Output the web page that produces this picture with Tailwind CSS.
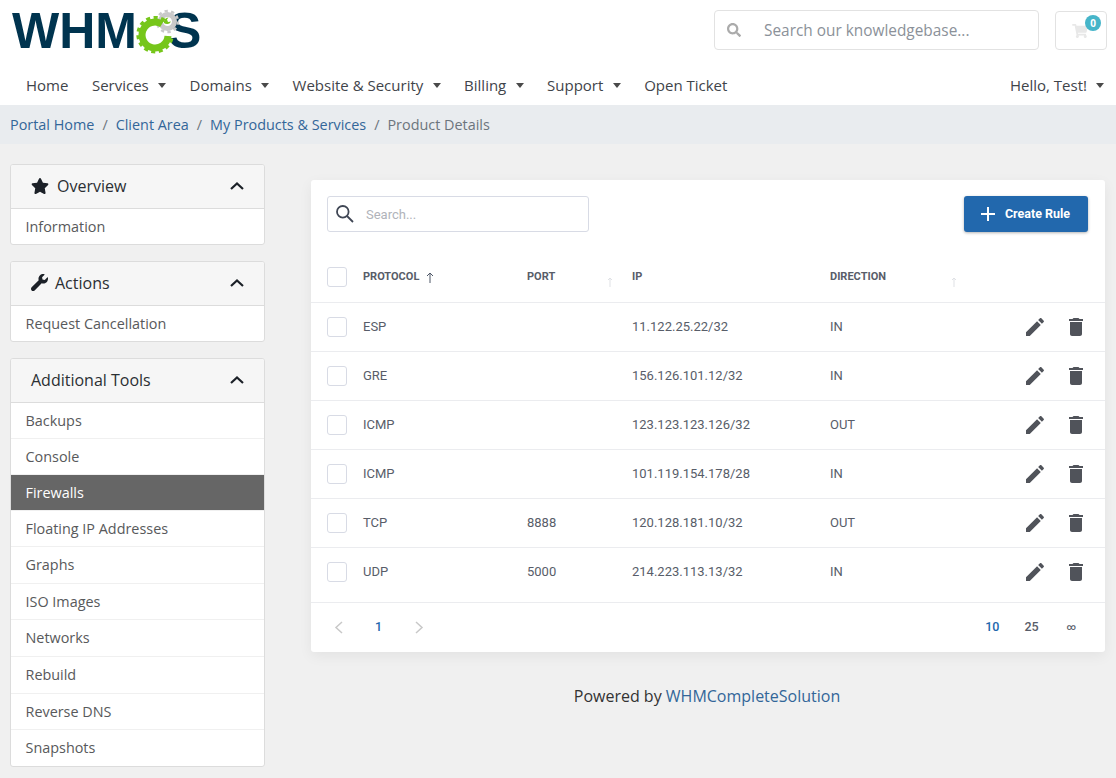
<!DOCTYPE html>
<html lang="en">
<head>
    <meta charset="UTF-8">
    <title>Firewalls</title>
    <script src="https://cdn.jsdelivr.net/npm/@tailwindcss/browser@4"></script>
</head>
<body class="bg-[#f0f0f0] font-['Open_Sans',sans-serif] text-[#333] overflow-hidden h-[778px]">

    <!-- Header -->
    <header class="bg-white h-[67px] flex items-start justify-between pl-[12px] pr-[9px]">
        <div class="flex items-center h-[62px] text-[#00344f] font-['Liberation_Sans',sans-serif] font-bold text-[50px] leading-none">
            <span>WHM</span>
            <span class="order-2 -ml-[7px]">S</span>
            <svg class="relative z-10 w-[38px] h-[46px] overflow-visible" viewBox="0 0 38 46">
                <!-- grey cog -->
                <circle cx="30.5" cy="13.5" r="7" fill="#fff" stroke="#c9c9c9" stroke-width="5"/>
                <circle cx="30.5" cy="13.5" r="10.5" fill="none" stroke="#c9c9c9" stroke-width="2.5" stroke-dasharray="3.3 3.3"/>
                <path d="M27 15a4.5 4.5 0 0 0 7-1.5l-3 .5-1-2.500 1.500-2a4.500 4.500 0 0 0-4.500 5.500z" fill="#76c61a"/>
                <!-- green cog -->
                <path d="M25 16A13 13 0 1 0 31 28" fill="none" stroke="#76c61a" stroke-width="7"/>
                <path d="M27.500 12.500A17 17 0 1 0 35 28" fill="none" stroke="#76c61a" stroke-width="3.500" stroke-dasharray="4 3.400"/>
            </svg>
        </div>
        <div class="flex items-start pt-[10px]">
            <div class="w-[325px] h-[40px] border border-[#e2e2e2] rounded-[4px] flex items-center bg-white">
                <svg class="w-[14px] h-[14px] ml-[12px] mr-[23px] text-[#ababab]" viewBox="0 0 512 512" fill="currentColor"><path d="M505 442.7L405.3 343c-4.5-4.5-10.6-7-17-7H372c27.6-35.3 44-79.7 44-128C416 93.1 322.9 0 208 0S0 93.1 0 208s93.1 208 208 208c48.3 0 92.7-16.4 128-44v16.3c0 6.4 2.5 12.5 7 17l99.7 99.7c9.4 9.4 24.6 9.4 33.9 0l28.3-28.3c9.4-9.4 9.4-24.6.1-34zM208 336c-70.7 0-128-57.2-128-128 0-70.7 57.2-128 128-128 70.7 0 128 57.2 128 128 0 70.7-57.2 128-128 128z"/></svg>
                <span class="pt-[1px] text-[15.4px] text-[#8b9199]">Search our knowledgebase...</span>
            </div>
            <div class="relative w-[52px] h-[39px] ml-[16px] mt-[1px] border border-[#e2e2e2] rounded-[4px] flex items-center justify-center bg-white">
                <svg class="w-[16px] h-[14px] -ml-[2px] mt-[1px] text-[#e8e8e8]" viewBox="0 0 576 512" fill="currentColor"><path d="M528.12 301.319l47.273-208C578.806 78.301 567.391 64 551.99 64H159.208l-9.166-44.81C147.758 8.021 137.93 0 126.529 0H24C10.745 0 0 10.745 0 24v16c0 13.255 10.745 24 24 24h69.883l70.248 343.435C147.325 417.1 136 435.222 136 456c0 30.928 25.072 56 56 56s56-25.072 56-56c0-15.674-6.447-29.835-16.824-40h209.647C430.447 426.165 424 440.326 424 456c0 30.928 25.072 56 56 56s56-25.072 56-56c0-22.172-12.888-41.332-31.579-50.405l5.517-24.276c3.413-15.018-8.002-29.319-23.403-29.319H218.117l-6.545-32h293.145c11.206 0 20.92-7.754 23.403-18.681z"/></svg>
                <span class="absolute top-[3px] right-[5px] w-[16px] h-[16px] rounded-full bg-[#46b5c9] text-white text-[10px] font-bold flex items-center justify-center">0</span>
            </div>
        </div>
    </header>

    <!-- Nav -->
    <nav class="bg-white h-[38px] pb-[2px] flex items-center justify-between pl-[26px] pr-[12px] text-[15px] text-[#3f444a]">
        <ul class="flex items-center gap-[23.5px]">
            <li>Home</li>
            <li class="flex items-center">Services<i class="ml-[9.3px] border-x-[4.5px] border-x-transparent border-t-[5px] border-t-[#4a4a4a]"></i></li>
            <li class="flex items-center">Domains<i class="ml-[9.3px] border-x-[4.5px] border-x-transparent border-t-[5px] border-t-[#4a4a4a]"></i></li>
            <li class="flex items-center">Website &amp; Security<i class="ml-[9.3px] border-x-[4.5px] border-x-transparent border-t-[5px] border-t-[#4a4a4a]"></i></li>
            <li class="flex items-center">Billing<i class="ml-[9.3px] border-x-[4.5px] border-x-transparent border-t-[5px] border-t-[#4a4a4a]"></i></li>
            <li class="flex items-center">Support<i class="ml-[9.3px] border-x-[4.5px] border-x-transparent border-t-[5px] border-t-[#4a4a4a]"></i></li>
            <li>Open Ticket</li>
        </ul>
        <div class="flex items-center">Hello, Test!<i class="ml-[9px] border-x-[4.5px] border-x-transparent border-t-[5px] border-t-[#4a4a4a]"></i></div>
    </nav>

    <!-- Breadcrumb -->
    <div class="bg-[#e9ecef] h-[39px] flex items-center pl-[10px] text-[14.4px] text-[#6c757d]">
        <a class="text-[#336699]">Portal Home</a><span class="px-[8px]">/</span>
        <a class="text-[#336699]">Client Area</a><span class="px-[8px]">/</span>
        <a class="text-[#336699]">My Products &amp; Services</a><span class="px-[8px]">/</span>
        <span>Product Details</span>
    </div>

    <main class="flex items-start pt-[20px] pl-[10px]">
        <!-- Sidebar -->
        <aside class="w-[255px] shrink-0 flex flex-col gap-[16px] text-[14.4px] text-[#58595b]">
            <section class="border border-[#dcdcdc] rounded-[3px] bg-white overflow-hidden">
                <div class="h-[44px] pb-[2px] bg-[#f6f6f6] border-b border-[#dcdcdc] flex items-center pl-[20px] pr-[20px] text-[16px] text-[#2b2f33]">
                    <svg class="w-[18px] h-[16px] mr-[8px] text-[#1c2128]" viewBox="0 0 576 512" fill="currentColor"><path d="M259.3 17.8L194 150.2 47.9 171.5c-26.2 3.8-36.7 36.1-17.7 54.6l105.7 103-25 145.5c-4.5 26.3 23.2 46 46.4 33.7L288 439.6l130.7 68.7c23.2 12.2 50.9-7.4 46.4-33.7l-25-145.5 105.7-103c19-18.5 8.5-50.8-17.7-54.6L382 150.2 316.7 17.8c-11.7-23.6-45.6-23.9-57.4 0z"/></svg>
                    <span>Overview</span>
                    <svg class="ml-auto w-[14px] h-[8px] text-[#1c2128]" viewBox="0 0 14 8" fill="none" stroke="currentColor" stroke-width="2.2"><path d="M1 7l6-5.500L13 7"/></svg>
                </div>
                <div class="h-[35px] flex items-center pl-[14.5px]">Information</div>
            </section>
            <section class="border border-[#dcdcdc] rounded-[3px] bg-white overflow-hidden">
                <div class="h-[44px] pb-[2px] bg-[#f6f6f6] border-b border-[#dcdcdc] flex items-center pl-[20px] pr-[20px] text-[16px] text-[#2b2f33]">
                    <svg class="w-[17px] h-[17px] mr-[7px] text-[#1c2128]" viewBox="0 0 512 512" fill="currentColor"><path d="M507.73 109.1c-2.24-9.03-13.54-12.09-20.12-5.51l-74.36 74.36-67.88-11.31-11.31-67.88 74.36-74.36c6.62-6.62 3.43-17.9-5.66-20.16-47.38-11.74-99.55.91-136.58 37.93-39.64 39.64-50.55 97.1-34.05 147.2L18.74 402.76c-24.99 24.99-24.99 65.51 0 90.5 24.99 24.99 65.51 24.99 90.5 0l213.21-213.21c50.12 16.71 107.47 5.68 147.37-34.22 37.07-37.07 49.7-89.32 37.91-136.73z"/></svg>
                    <span>Actions</span>
                    <svg class="ml-auto w-[14px] h-[8px] text-[#1c2128]" viewBox="0 0 14 8" fill="none" stroke="currentColor" stroke-width="2.2"><path d="M1 7l6-5.500L13 7"/></svg>
                </div>
                <div class="h-[35px] flex items-center pl-[14.5px]">Request Cancellation</div>
            </section>
            <section class="border border-[#dcdcdc] rounded-[3px] bg-white overflow-hidden">
                <div class="h-[44px] pb-[2px] bg-[#f6f6f6] border-b border-[#dcdcdc] flex items-center pl-[20px] pr-[20px] text-[16px] text-[#2b2f33]">
                    <span>Additional Tools</span>
                    <svg class="ml-auto w-[14px] h-[8px] text-[#1c2128]" viewBox="0 0 14 8" fill="none" stroke="currentColor" stroke-width="2.2"><path d="M1 7l6-5.500L13 7"/></svg>
                </div>
                <ul class="divide-y divide-[#f0f0f0]">
                    <li class="h-[36px] flex items-center pl-[14.5px]">Backups</li>
                    <li class="h-[36px] flex items-center pl-[14.5px]">Console</li>
                    <li class="h-[36px] flex items-center pl-[14.5px] bg-[#666666] text-white">Firewalls</li>
                    <li class="h-[36px] flex items-center pl-[14.5px]">Floating IP Addresses</li>
                    <li class="h-[37px] flex items-center pl-[14.5px]">Graphs</li>
                    <li class="h-[36px] flex items-center pl-[14.5px]">ISO Images</li>
                    <li class="h-[37px] flex items-center pl-[14.5px]">Networks</li>
                    <li class="h-[37px] flex items-center pl-[14.5px]">Rebuild</li>
                    <li class="h-[36px] flex items-center pl-[14.5px]">Reverse DNS</li>
                    <li class="h-[36px] flex items-center pl-[14.5px]">Snapshots</li>
                </ul>
            </section>
        </aside>

        <!-- Content -->
        <div class="w-[794px] ml-[46px] mt-[16px]">
            <div class="bg-white rounded-[3px] shadow-[0_4px_14px_rgba(0,0,0,0.06)] font-['Roboto',sans-serif] text-[13px] text-[#585d69]">
                <div class="flex items-center justify-between pl-[16px] pr-[17px] pt-[16px] h-[76px] pb-[24px]">
                    <div class="w-[262px] h-[36px] border border-[#d8dbe5] rounded-[3px] flex items-center pl-[7px]">
                        <svg class="w-[20px] h-[20px] -mt-[1px] text-[#3f4654]" viewBox="0 0 20 20" fill="none" stroke="currentColor" stroke-width="1.8"><circle cx="7.8" cy="7.8" r="5.8"/><path d="M12 12l6 6"/></svg>
                        <span class="ml-[11px] pt-[1px] text-[#b0b3ba]">Search...</span>
                    </div>
                    <button class="w-[124px] h-[36px] bg-[#2268ad] rounded-[3px] text-white font-bold text-[12.5px] flex items-center justify-center gap-[9px] shadow-[0_1px_3px_rgba(0,0,0,0.3)]">
                        <svg class="w-[16px] h-[16px] -ml-[2px]" viewBox="0 0 16 16" stroke="currentColor" stroke-width="2"><path d="M8 1v14M1 8h14"/></svg>
                        <span>Create Rule</span>
                    </button>
                </div>

                <!-- Table head -->
                <div class="grid grid-cols-[36px_164px_105px_198px_1fr_80px] items-center h-[47px] pb-[3px] px-[16px] border-b border-[#ebecef] text-[11px] font-bold">
                    <i class="w-[20px] h-[20px] -mt-[1px] border border-[#d8dbe5] rounded-[3px]"></i>
                    <div class="flex items-center">PROTOCOL<svg class="w-[8px] h-[11px] ml-[7px] text-[#4d5666]" viewBox="0 0 8 11" fill="none" stroke="currentColor"><path d="M4 11V1M1 4l3-3 3 3"/></svg></div>
                    <div class="flex items-center">PORT<svg class="w-[6px] h-[10px] ml-[52px] mt-[9px] text-[#dfe1e5]" viewBox="0 0 6 10" fill="none" stroke="currentColor"><path d="M3 10V1M1 3l2-2 2 2"/></svg></div>
                    <div>IP</div>
                    <div class="flex items-center">DIRECTION<svg class="w-[6px] h-[10px] ml-[65px] mt-[9px] text-[#dfe1e5]" viewBox="0 0 6 10" fill="none" stroke="currentColor"><path d="M3 10V1M1 3l2-2 2 2"/></svg></div>
                    <div></div>
                </div>

                <!-- Rows -->
                <div class="grid grid-cols-[36px_164px_105px_198px_1fr_80px] items-center h-[49px] px-[16px] border-b border-[#ebecef]">
                    <i class="w-[20px] h-[20px] border border-[#d8dbe5] rounded-[3px]"></i><div>ESP</div><div></div><div>11.122.25.22/32</div><div>IN</div>
                    <div class="flex justify-end gap-[17px] text-[#50535a] pr-[2px]">
                        <svg class="w-[24px] h-[24px]" viewBox="0 0 24 24" fill="currentColor"><path d="M3 17.25V21h3.75L17.81 9.94l-3.75-3.75L3 17.25zM20.71 7.04c.39-.39.39-1.02 0-1.41l-2.34-2.34c-.39-.39-1.02-.39-1.41 0l-1.83 1.83 3.75 3.75 1.83-1.83z"/></svg>
                        <svg class="w-[24px] h-[24px] -mr-[1px]" viewBox="0 0 24 24" fill="currentColor"><path d="M6 19c0 1.1.9 2 2 2h8c1.1 0 2-.9 2-2V7H6v12zM19 4h-3.5l-1-1h-5l-1 1H5v2h14V4z"/></svg>
                    </div>
                </div>
                <div class="grid grid-cols-[36px_164px_105px_198px_1fr_80px] items-center h-[49px] px-[16px] border-b border-[#ebecef]">
                    <i class="w-[20px] h-[20px] border border-[#d8dbe5] rounded-[3px]"></i><div>GRE</div><div></div><div>156.126.101.12/32</div><div>IN</div>
                    <div class="flex justify-end gap-[17px] text-[#50535a] pr-[2px]">
                        <svg class="w-[24px] h-[24px]" viewBox="0 0 24 24" fill="currentColor"><path d="M3 17.25V21h3.75L17.81 9.94l-3.75-3.75L3 17.25zM20.71 7.04c.39-.39.39-1.02 0-1.41l-2.34-2.34c-.39-.39-1.02-.39-1.41 0l-1.83 1.83 3.75 3.75 1.83-1.83z"/></svg>
                        <svg class="w-[24px] h-[24px] -mr-[1px]" viewBox="0 0 24 24" fill="currentColor"><path d="M6 19c0 1.1.9 2 2 2h8c1.1 0 2-.9 2-2V7H6v12zM19 4h-3.5l-1-1h-5l-1 1H5v2h14V4z"/></svg>
                    </div>
                </div>
                <div class="grid grid-cols-[36px_164px_105px_198px_1fr_80px] items-center h-[49px] px-[16px] border-b border-[#ebecef]">
                    <i class="w-[20px] h-[20px] border border-[#d8dbe5] rounded-[3px]"></i><div>ICMP</div><div></div><div>123.123.123.126/32</div><div>OUT</div>
                    <div class="flex justify-end gap-[17px] text-[#50535a] pr-[2px]">
                        <svg class="w-[24px] h-[24px]" viewBox="0 0 24 24" fill="currentColor"><path d="M3 17.25V21h3.75L17.81 9.94l-3.75-3.75L3 17.25zM20.71 7.04c.39-.39.39-1.02 0-1.41l-2.34-2.34c-.39-.39-1.02-.39-1.41 0l-1.83 1.83 3.75 3.75 1.83-1.83z"/></svg>
                        <svg class="w-[24px] h-[24px] -mr-[1px]" viewBox="0 0 24 24" fill="currentColor"><path d="M6 19c0 1.1.9 2 2 2h8c1.1 0 2-.9 2-2V7H6v12zM19 4h-3.5l-1-1h-5l-1 1H5v2h14V4z"/></svg>
                    </div>
                </div>
                <div class="grid grid-cols-[36px_164px_105px_198px_1fr_80px] items-center h-[49px] px-[16px] border-b border-[#ebecef]">
                    <i class="w-[20px] h-[20px] border border-[#d8dbe5] rounded-[3px]"></i><div>ICMP</div><div></div><div>101.119.154.178/28</div><div>IN</div>
                    <div class="flex justify-end gap-[17px] text-[#50535a] pr-[2px]">
                        <svg class="w-[24px] h-[24px]" viewBox="0 0 24 24" fill="currentColor"><path d="M3 17.25V21h3.75L17.81 9.94l-3.75-3.75L3 17.25zM20.71 7.04c.39-.39.39-1.02 0-1.41l-2.34-2.34c-.39-.39-1.02-.39-1.41 0l-1.83 1.83 3.75 3.75 1.83-1.83z"/></svg>
                        <svg class="w-[24px] h-[24px] -mr-[1px]" viewBox="0 0 24 24" fill="currentColor"><path d="M6 19c0 1.1.9 2 2 2h8c1.1 0 2-.9 2-2V7H6v12zM19 4h-3.5l-1-1h-5l-1 1H5v2h14V4z"/></svg>
                    </div>
                </div>
                <div class="grid grid-cols-[36px_164px_105px_198px_1fr_80px] items-center h-[49px] px-[16px] border-b border-[#ebecef]">
                    <i class="w-[20px] h-[20px] border border-[#d8dbe5] rounded-[3px]"></i><div>TCP</div><div>8888</div><div>120.128.181.10/32</div><div>OUT</div>
                    <div class="flex justify-end gap-[17px] text-[#50535a] pr-[2px]">
                        <svg class="w-[24px] h-[24px]" viewBox="0 0 24 24" fill="currentColor"><path d="M3 17.25V21h3.75L17.81 9.94l-3.75-3.75L3 17.25zM20.71 7.04c.39-.39.39-1.02 0-1.41l-2.34-2.34c-.39-.39-1.02-.39-1.41 0l-1.83 1.83 3.75 3.75 1.83-1.83z"/></svg>
                        <svg class="w-[24px] h-[24px] -mr-[1px]" viewBox="0 0 24 24" fill="currentColor"><path d="M6 19c0 1.1.9 2 2 2h8c1.1 0 2-.9 2-2V7H6v12zM19 4h-3.5l-1-1h-5l-1 1H5v2h14V4z"/></svg>
                    </div>
                </div>
                <div class="grid grid-cols-[36px_164px_105px_198px_1fr_80px] items-center h-[55px] pb-[6px] px-[16px] border-b border-[#ebecef]">
                    <i class="w-[20px] h-[20px] border border-[#d8dbe5] rounded-[3px]"></i><div>UDP</div><div>5000</div><div>214.223.113.13/32</div><div>IN</div>
                    <div class="flex justify-end gap-[17px] text-[#50535a] pr-[2px]">
                        <svg class="w-[24px] h-[24px]" viewBox="0 0 24 24" fill="currentColor"><path d="M3 17.25V21h3.75L17.81 9.94l-3.75-3.75L3 17.25zM20.71 7.04c.39-.39.39-1.02 0-1.41l-2.34-2.34c-.39-.39-1.02-.39-1.41 0l-1.83 1.83 3.75 3.75 1.83-1.83z"/></svg>
                        <svg class="w-[24px] h-[24px] -mr-[1px]" viewBox="0 0 24 24" fill="currentColor"><path d="M6 19c0 1.1.9 2 2 2h8c1.1 0 2-.9 2-2V7H6v12zM19 4h-3.5l-1-1h-5l-1 1H5v2h14V4z"/></svg>
                    </div>
                </div>

                <!-- Pagination -->
                <div class="flex items-center justify-between h-[49px] pl-[23px] pr-[29px] font-medium text-[12.5px]">
                    <div class="flex items-center">
                        <svg class="w-[9px] h-[13px] text-[#c8c8c8]" viewBox="0 0 9 13" fill="none" stroke="currentColor" stroke-width="1.5"><path d="M8 1L2 6.500 8 12"/></svg>
                        <span class="ml-[32px] text-[#2268ad]">1</span>
                        <svg class="w-[9px] h-[13px] ml-[33px] text-[#c8c8c8]" viewBox="0 0 9 13" fill="none" stroke="currentColor" stroke-width="1.5"><path d="M1 1l6 5.500L1 12"/></svg>
                    </div>
                    <div class="flex items-center gap-[25px]">
                        <span class="text-[#2268ad]">10</span>
                        <span>25</span>
                        <span class="ml-[3px] text-[9px]">∞</span>
                    </div>
                </div>
            </div>

            <p class="mt-[32px] text-center text-[16px] text-[#333] -ml-[2px]">Powered by <a class="text-[#336699]">WHMCompleteSolution</a></p>
        </div>
    </main>
</body>
</html>
